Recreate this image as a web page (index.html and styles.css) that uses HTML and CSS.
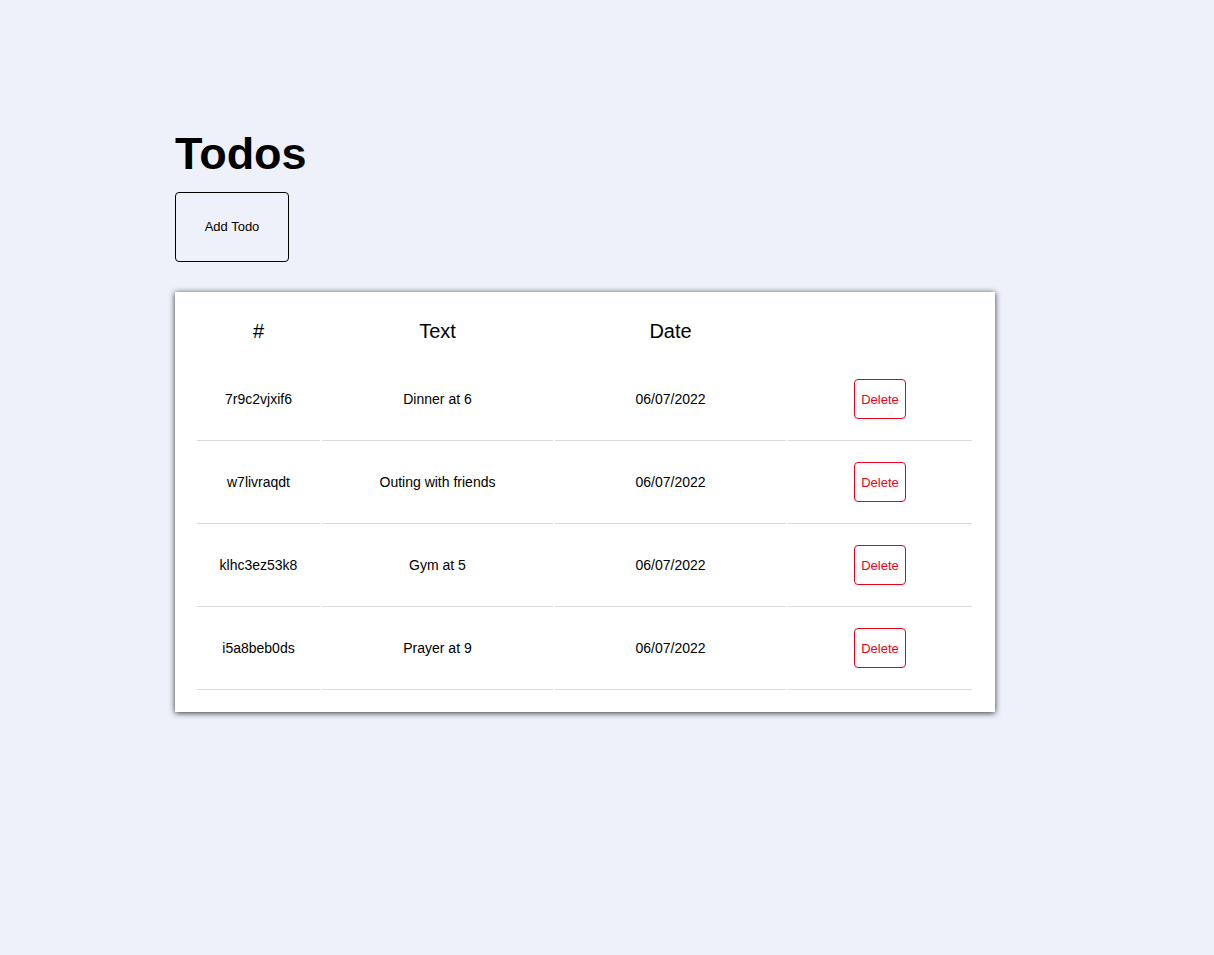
FILE: index.html
```html
<!DOCTYPE html>
<html lang="en">
<head>
    <meta charset="UTF-8">
    <meta name="viewport" content="width=device-width, initial-scale=1.0">
    <title>Todos</title>
    <link rel="stylesheet" href="styles.css">
</head>
<body>
    <div class="container">
        <h1 class="title">Todos</h1>
        <button class="add-btn">Add Todo</button>

        <div class="card">
            <table class="todo-table">
                <thead>
                    <tr>
                        <th class="col-id">#</th>
                        <th class="col-text">Text</th>
                        <th class="col-date">Date</th>
                        <th class="col-action"></th>
                    </tr>
                </thead>
                <tbody>
                    <tr>
                        <td>7r9c2vjxif6</td>
                        <td>Dinner at 6</td>
                        <td>06/07/2022</td>
                        <td><button class="delete-btn">Delete</button></td>
                    </tr>
                    <tr>
                        <td>w7livraqdt</td>
                        <td>Outing with friends</td>
                        <td>06/07/2022</td>
                        <td><button class="delete-btn">Delete</button></td>
                    </tr>
                    <tr>
                        <td>klhc3ez53k8</td>
                        <td>Gym at 5</td>
                        <td>06/07/2022</td>
                        <td><button class="delete-btn">Delete</button></td>
                    </tr>
                    <tr>
                        <td>i5a8beb0ds</td>
                        <td>Prayer at 9</td>
                        <td>06/07/2022</td>
                        <td><button class="delete-btn">Delete</button></td>
                    </tr>
                </tbody>
            </table>
        </div>
    </div>
</body>
</html>
```

FILE: styles.css
```css
body {
    margin: 0;
    font-family: "Liberation Sans", Arial, sans-serif;
    background: #eef1fa;
    color: #000;
}

.container {
    width: 820px;
    margin-left: 175px;
    padding-top: 127px;
    padding-bottom: 40px;
}

.title {
    font-size: 45px;
    font-weight: bold;
    margin: 0 0 12px;
    line-height: 53px;
}

.add-btn {
    display: block;
    width: 114px;
    height: 70px;
    background: transparent;
    border: 1px solid #000;
    border-radius: 4px;
    font-family: inherit;
    font-size: 13px;
    color: #000;
    padding: 0 0 2px;
    cursor: pointer;
}

.card {
    margin-top: 30px;
    background: #fff;
    padding: 20px;
    box-shadow: 0 1px 6px rgba(0, 0, 0, 0.8);
}

.todo-table {
    border-spacing: 2px;
    width: 779px;
    table-layout: fixed;
}

.todo-table th {
    font-size: 20px;
    font-weight: normal;
    height: 34px;
    padding: 0 0 10px;
    text-align: center;
}

.col-id { width: 123px; }
.col-text { width: 231px; }
.col-date { width: 231px; }
.col-action { width: 184px; }

.todo-table td {
    font-size: 14px;
    text-align: center;
    height: 78px;
    padding: 0 0 2px;
    border-bottom: 1px solid #dadada;
}

.delete-btn {
    width: 52px;
    height: 40px;
    background: #fff;
    border: 1px solid #f0001c;
    border-radius: 4px;
    color: #f0001c;
    font-family: inherit;
    font-size: 13px;
    padding: 0;
    cursor: pointer;
}
```
